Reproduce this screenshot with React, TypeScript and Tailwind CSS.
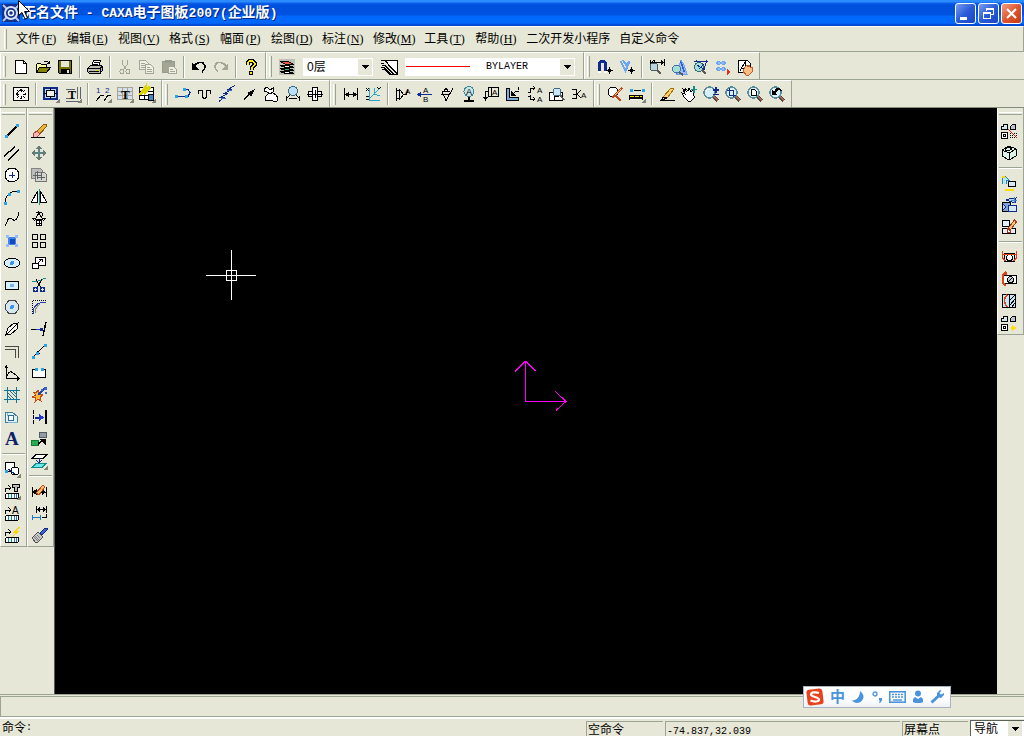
import React, { ReactNode } from "react";

const K = "#000000";
const N = "#10298c";
const T = "#108c8c";
const G = "#a5a594";
const B = "#6ba5f0";

const p = (d: string, stroke = K, fill = "none", w = 1) => (
  <path d={d} stroke={stroke} fill={fill} strokeWidth={w} />
);
const t = (x: number, y: number, s: string, size = 9, fill = K) => (
  <text x={x} y={y} fontSize={size} fill={fill} fontFamily="Liberation Sans, sans-serif">
    {s}
  </text>
);
const b = (x: number, y: number, s: string, size = 12, fill = K) => (
  <text x={x} y={y} fontSize={size} fill={fill} fontWeight="bold" fontFamily="Liberation Serif, serif">
    {s}
  </text>
);
const dot = (x: number, y: number, fill = "#29a5e7", s = 3) => (
  <rect x={x} y={y} width={s} height={s} fill={fill} />
);
const corner = <path d="M17 12v5h-5z" fill="#84847b" />;
const lens = (
  <>
    <path d="M10 10l5 5" stroke="#4a4a4a" strokeWidth="3" />
    <path d="M11 10.500l4 4" stroke="#b5654a" />
    <circle cx="6.500" cy="6.500" r="5.500" fill="#d6f0f7" stroke="#5a8c9c" strokeWidth="1.500" />
    <path d="M3.500 6a3 3 0 0 1 3-3" stroke="#fff" fill="none" />
  </>
);
const chip = (
  <>
    <rect x="1.500" y="10.500" width="13" height="5" rx="1.500" fill="#fff" stroke={K} />
    {p("M4.500 11v4M7.500 11v4", T, "none", 1)}
    {p("M10.500 11v4M12.500 11v4", "#2173ce", "none", 1)}
  </>
);
const turn = p("M1.500 9v-4h5M4.500 2.500l2.500 2.500l-2.500 2.500");
const parts = (
  <>
    {p("M.5 3.500h2v-2h4v5h-6z", K, "#d6e7ef")}
    {p("M9.500 6.500v-3l2-2h3v5z", K, "#bdc6ce")}
    {p("M.5 9.500h6v6h-6z", K, "#fff")}
    {p("M2.500 11.500h2v2h-2z")}
  </>
);
const brush = (
  <>
    {p("M7.500 9l6-8l2 2l-6 8z", "#a5421a", "#f7c67b")}
    {p("M6 9l4 4l-4 1z", "#b53118", "#fff")}
  </>
);

const icons: Record<string, ReactNode> = {
  新建: <>{p("M2.500 1.500h8l3 3v10h-11z", K, "#fff")}{p("M10.500 1.500v3h3")}</>,
  打开: <>{p("M1.500 13.500v-8l1-1h3l1 1h5v3", K, "#ffff9c")}{p("M1.500 13.500l3-5h11l-4 5z", K, "#848400")}{p("M8.500 3.500l1-1h3l2 2M14.500 1.500v3h-3")}</>,
  保存: <>{p("M1.500 1.500h13v13h-12l-1-1z", K, "#737300")}<rect x="4" y="2" width="8" height="6" fill="#e6e7d6" /><rect x="4" y="10" width="9" height="5" /><rect x="10" y="11" width="2" height="3" fill="#e6e7d6" /></>,
  打印: <>{p("M4.500 7.500l2-6h7l-2 6z", K, "#fff")}{p("M7 3.500h5M6 5.500h5")}{p("M.5 9.500l3-3h11l1 1v4l-3 3h-10l-2-2z", K, "#bdbdb5")}{p("M1 9.500h12v5M2 12.500h10M13 9.500l2-2")}<rect x="9" y="11" width="2" height="1" fill="#dede00" /></>,
  剪切: <>{p("M5.500 1v4l4 6M10.500 1v4l-4 6", G)}<circle cx="5" cy="12.500" r="2" fill="none" stroke={G} /><circle cx="11" cy="12.500" r="2" fill="none" stroke={G} /></>,
  复制: <>{p("M.5 1.500h6l3 3v6h-9z", G, "#efefe6")}{p("M2 4.500h4M2 6.500h5M2 8.500h5", G)}{p("M6.500 5.500h5l3 3v6h-8z", G, "#efefe6")}{p("M8 8.500h3M8 10.500h5M8 12.500h5", G)}</>,
  粘贴: <>{p("M1.500 2.500h12v11h-12z", "#949c8c", G)}<rect x="4" y="1" width="7" height="3" fill="#949c8c" />{p("M7.500 7.500h5l3 3v4h-8z", G, "#efefe6")}{p("M9 10.500h3M9 12.500h5", G)}</>,
  撤销: <>{p("M3 7c3-4 6-4 9-3c3 2 3 6-1 9", K, "none", 1.5)}<path d="M1 4v7h7z" /></>,
  重做: <>{p("M13 7c-3-4-6-4-9-3c-3 2-3 6 1 8", G, "none", 1.5)}<path d="M15 4v7h-7z" fill={G} /></>,
  帮助: <>{p("M4.500 6v-2l2-2h3l2 2v2l-3 3v2", K, "none", 4)}{p("M4.500 6v-2l2-2h3l2 2v2l-3 3v2", "#ffef00", "none", 2)}<rect x="6" y="12" width="4" height="4" /><rect x="7" y="13" width="2" height="2" fill="#ffef00" /></>,
  图层: <>{p("M1 12.500h8l6 2h-8z", K, "#fff")}{p("M1 9.500h8l6 2h-8z", K, "#29bd63")}{p("M1 6.500h8l6 2h-8z", K, "#fff")}{p("M1 2.500h8l6 3h-8z", K, "#f75a42")}</>,
  线型: <>{p("M3.500 1.500h13v14z", K, "#fff")}{p("M0 1.500h4l13 14M0 4.500h3M1 6.500h3l9 9h3M0 8.500h3l7 7h3M1 10.500h3l5 5h2")}</>,
  捕捉: <>{p("M2.500 12v-7a3 3 0 0 1 6 0v7", N, "none", 3)}{p("M1 12.500h3M7 12.500h3", "#fff", "none", 2)}{p("M12.500 8v7M9 11.500h7M11 10l3 3M14 10l-3 3")}</>,
  正交: <>{p("M1.500 2l5 10l4-10M4 1l3 5l3-3", B, "none", 2)}{p("M12.500 8v7M9 11.500h7M11 10l3 3M14 10l-3 3")}</>,
  查询距离: <>{p("M1.500 1v8M15.500 0v7M2 3.500h13M2 3.500l3-2v4zM15 3.500l-3-2v4z")}<circle cx="5" cy="8" r="4" fill="#bdd6de" stroke="#4a5a63" />{p("M8 11l4 4", "#5a5a5a", "none", 2)}</>,
  查询面积: <>{p("M10 1l3 5l3 9h-10z", B, "#9cbdff")}<circle cx="5.500" cy="10" r="4" fill="#a5ded6" stroke="#4273a5" />{p("M9.500 2l4 11", "#3163ce", "none", 1.5)}{p("M8 13l4 3", "#5a5a5a", "none", 2)}</>,
  查询角度: <>{p("M1 2.500h14M3 1l9 10M14 1l-4 12", N)}<circle cx="6" cy="8" r="4.500" fill="#a5ded6" stroke="#316b73" />{p("M4 6l8 5M11 5l-5 5", N)}{p("M9 11l4 4", "#5a5a5a", "none", 2)}</>,
  点阵: <>{p("M1 4l3-2l2 2l2-2l3 2M1 4l3 2l2-2l2 2l3-2M1 10l3-2l2 2l2-2l3 2M1 10l3 2l2-2l2 2l3-2", B, "#94bdff")}<path d="M12 10v6l4-3z" fill="#e73118" /></>,
  浏览: <>{p("M1.500 1.500h9l3 3v9h-12z", K, "#fff")}{p("M3 12l5-9v9M4 9h4")}{p("M8 8l2-2l1 2l1-2l1 2l2 0v5l-3 3h-3l-3-4z", "#b5632a", "#ffbd84")}</>,

  平移: <>{p("M.5 1.500h15v13h-15z", K, "#f7f7ef")}{p("M8 3v3M8 10v3M3 8h3M10 8h3M4 4l2 2M12 4l-2 2M4 12l2-2M12 12l-2-2")}<path d="M8 2l2 2.500H6zM8 14l2-2.500H6zM2 8l2.500-2v4zM14 8l-2.500-2v4z" /></>,
  图幅: <>{p("M1 2h13v11h-13z", N, "#bdd6f7", 2)}{p("M3.500 4.500h8v6h-8z", K, "#f0f3e8")}{p("M7.500 2v3M7.500 10v3M1 7.500h3M11 7.500h3")}{corner}</>,
  标题栏: <>{p("M.5 3.500h9M.5 12.500h9M12.500 1v12M15 1v12M1 15.500h14", "#5a6373")}{b(3, 13, "T", 12)}{corner}</>,
  序号: <>{t(1, 7, "1", 8, N)}{t(10, 7, "2", 8, N)}{p("M1 15l5-6h3M9 15l4-6h3")}{corner}</>,
  明细表: <>{p("M.5 1.500h15v12h-15zM1 5.500h14M1 9.500h14M5.500 2v11M10.500 2v11", G, "#d6deef")}{b(4, 13, "T", 13)}{corner}</>,
  图符: <>{p("M.5 1.500h14v12h-14zM1 5.500h14M1 9.500h14M5.500 2v11", K, "#fff")}{p("M1 9l5-7v4l5-5", "#ded600", "none", 3)}<rect x="9.500" y="8.500" width="5" height="6" fill="#428cc6" stroke={K} />{corner}</>,
  多段线: <>{dot(0, 9)}{dot(10, 9)}{dot(8, 2)}{p("M3 10.500h7M11 3.500h2l2 3l-2 4", N)}</>,
  波浪线: p("M1.500 8v-3l1-1h2l1 1v6l1 1h2l1-1v-6l1-1h2l1 1v3"),
  折断线: <>{p("M0 15.500l5-4H1.500l7-4H5.500l7-4H9l7-4", N)}{p("M2 12.500h5M8 4.500h5", "#426bce")}</>,
  箭头: <>{p("M3 13.500l5-5")}<path d="M14 3l-4 8l-4-4z" /></>,
  齿轮: p("M1 3l3-2l3 3l3-2v4l-3 2l-3-2l-3-1zM5 8l-3 3l1 4l4-1l3 1l4 0l1-3l-2-3l-3-2", K, "#fff"),
  放大镜: <><circle cx="8" cy="5" r="4.500" fill="#bddef7" stroke="#3a6b84" />{p("M5 9l-4 4M11 9l4 4M4 12.500h8")}{p("M1.500 10v5M14.500 10v5")}</>,
  孔: <>{p("M1.500 5.500h13v5h-13z", K, "#fff")}{p("M5.500 1.500h5v13h-5z", K, "#fff")}{p("M0 8h16M8 4v8")}</>,
  尺寸标注: <>{p("M1.500 2v12M14.500 2v12M2 8.500h12")}<path d="M2 8.500l4-3v6zM14 8.500l-4-3v6z" /></>,
  坐标标注: <>{p("M4.500 2v12h10M4 13L15 2M9 2l0 6l6 2", "#29a5ce")}{p("M1 2l3 3M1 5l3-3M12 1l2 2l2-2M1 10h3M1 13h3")}</>,
  倒角标注: <>{p("M1.500 2v13M1.500 4.500h4l3 4l-3 4h-4M4.500 3v11M8 8.500h3l2-4")}{t(10, 8, "A", 8)}</>,
  基准: <>{t(6, 7, "A", 8)}{t(6, 16, "B", 8)}{p("M1 8.500h14", N)}<path d="M0 8.500l4-3v6z" fill={N} /></>,
  粗糙度: <>{p("M3 5.500l4 9l7-12M3 5.500h8M2 8.500h8")}{p("M5 5l2-3l2 3")}</>,
  基准代号: <><circle cx="8" cy="5.500" r="5" fill="#c6e7e7" stroke="#428494" />{t(5, 9, "A", 9)}{p("M8 11v3M3 14.500h10", K, "none", 2)}</>,
  形位公差: <>{p("M5.500 1.500h10v9h-10zM2.500 14v-9h3M8.500 2v8")}<path d="M0 11h5l-2.500 4z" />{t(9, 9, "A", 8)}</>,
  焊接: <>{p("M1.500 2.500h3v9h9v3h-12z", K, "#7badde")}{p("M6 10l5-5h3M13 1v3")}<path d="M6 10v-5l5 5z" /></>,
  剖切: <>{p("M3.500 7v-5h4M6 0l2 2l-2 2M3.500 9v4h4M6 11l2 2l-2 2M1 6h3M1 10h3")}{t(10, 7, "A", 8)}{t(10, 16, "A", 8)}</>,
  局部放大: <>{p("M.5 6.500h13v8h-13zM5 14v-4h5", K, "#fff")}<circle cx="8" cy="6" r="4" fill="#c6e7f7" stroke="#426b84" />{p("M11 9l4 5", "#5a5a5a", "none", 2)}</>,
  向视图: <>{p("M1 3.500h4v9h-4M2 8h4M10 4l-4 4l4 4")}{t(10, 12, "A", 8)}</>,
  重画: <><circle cx="6" cy="6" r="5" fill="#fff" stroke={K} />{p("M9 10l5 5M15 2L5 12", "#b54a21", "none", 2)}{p("M14 3L8 9", "#ffc67b", "none", 1)}</>,
  线宽: <>{dot(1, 3)}{dot(13, 3)}{p("M5 4.500h7", K, "none", 1)}<rect y="9" width="14" height="5" /><path d="M1 10.500h12" stroke="#ffe700" strokeDasharray="4 1" /><path d="M1 13h12" stroke="#ffffff" />{corner}</>,
  画笔: <>{p("M4 11l8-9l3 1l-7 9z", "#ad6b10", "#f7d66b")}{p("M4 11l4 1l-6 2.500z")}{p("M2 14.500h14")}</>,
  动态平移: <>{p("M2 3l3 2l-1-3l3 3l1-3l2 4l2-2v5l2 2l-4 4H7l-4-4L1 7l3 1z", K, "#fff")}{p("M13 0v7M10 3.500h6", T, "none", 1.5)}</>,
  动态缩放: <>{lens}{p("M13 1v6M10 4h6M10 8.500h6", N, "none", 1.5)}</>,
  窗口缩放: <>{lens}{p("M4.500 2v7h6M2 4.500h6.500v6", N)}</>,
  显示全部: <>{lens}{p("M4.500 3.500h3l2 2v4h-5z", K, "#fff")}</>,
  显示回溯: <>{lens}{p("M3 9l6-6M6 4c3-3 5-1 6 1", K, "none", 1.5)}<path d="M3 4v5h5z" /></>,

  直线: <>{p("M3 13L13 3", K, "none", 1.5)}{dot(1, 12)}{dot(12, 1)}</>,
  平行线: p("M0 11L11 2M4 15L15 5", K, "none", 1.5),
  圆: <><circle cx="8" cy="8" r="7" fill="#fff" stroke={K} />{p("M8.500 5v6M5 8.500h6", N, "none", 1)}</>,
  圆弧: <>{p("M1 14c0-7 5-12 13-12")}{dot(0, 13)}{dot(4, 4)}{dot(13, 1)}</>,
  样条: p("M1 15c2-2 2-8 5-8c3 0 2 3 5 2c3-1 3-5 4-8"),
  点: <><rect x="4" y="4" width="8" height="8" fill="#4284e7" /><rect x="6" y="6" width="5" height="5" fill="#104ac6" />{dot(2, 2, "#94bdf7")}{dot(11, 2, "#94bdf7")}{dot(2, 11, "#94bdf7")}{dot(11, 11, "#94bdf7")}</>,
  椭圆: <><ellipse cx="8" cy="8" rx="7.500" ry="5" fill="#d6f0ff" stroke={K} /><circle cx="8" cy="8" r="2" fill="#4294e7" /></>,
  矩形: <>{p("M1.500 4.500h13v8h-13z", K, "#d6f0ff")}<circle cx="8" cy="8.500" r="2" fill="#73b5ef" /></>,
  正多边形: <>{p("M5 1.500h6l3.500 4v5l-3.500 4H5l-3.500-4v-5z", "#424242", "#d6e7ef")}<circle cx="8" cy="8" r="2" fill="#4294e7" /></>,
  中心线: <>{p("M2 13l2-6l6-5l4 1l-1 5l-6 5z", K, "#f7f7ef")}{p("M1 15L15 1M6 10l5-5")}</>,
  等距线: p("M1 3.500h13v11M1 6.500h10v8", "#4a4a42", "none", 1),
  公式曲线: p("M2.500 1v12.500h13M1 3l1.500-2l1.500 2M13 11.500l2 2l-2 2M3 11c3-7 5-4 10 0"),
  剖面线: <>{p("M3.500 0v16M12.500 0v16M0 3.500h16M0 12.500h16", "#10739c", "none", 1.5)}{p("M4 6l6 6M4 9l3 3M6 4l6 6M9 4l3 3", "#216b8c")}</>,
  填充: <>{p("M1.500 3.500h7l5 4v6h-12z", "#427b9c", "#def0f7")}<circle cx="7" cy="9" r="3" fill="#fff" stroke="#316b94" />{p("M3 4v3M4 13.500h10", "#7bb5d6")}</>,
  文字: b(1, 14, "A", 19, "#10216b"),
  块生成: <>{p("M1.500 1.500h9v9h-9z", K, "#fff")}<circle cx="11" cy="10" r="4" fill="#fff" stroke={K} />{p("M4 8l7 5", N)}{dot(1, 9)}{corner}</>,
  提取图符: <>{turn}{p("M8.500 1.500h7v3h-2v4h-3v-4h-2z", K, "#bdbdb5")}{chip}{corner}</>,
  驱动图符: <>{turn}{t(8, 9, "A", 10)}{chip}</>,
  图库: <>{turn}<path d="M14 0l-6 6h3l-3 4l8-6h-3l3-4z" fill="#ffd600" />{chip}</>,

  橡皮: <>{p("M5 9l8-8h2v3l-7 8z", "#8c5a10", "#e7b53a")}{p("M2 11l4-3l3 3l-3 3H3z", "#a54242", "#ffb5ad")}{p("M0 14.500h14")}</>,
  移动: <>{p("M8 2v12M2 8h12", "#5a8484", "none", 2)}<path d="M8 0l3 4H5zM8 16l3-4H5zM0 8l4-3v6zM16 8l-4-3v6z" fill="#6b7b73" /></>,
  平移复制: <>{p("M.5 1.500h9l2 2v8h-11z", "#848484", "#bdbdbd")}{p("M4.500 5.500h9l2 2v7h-11z", "#737373", "#d6d6ce")}{p("M6 4v8M2 8h8M10 6v7M7 10h7", "#5a6363")}</>,
  镜像: <>{p("M8 0v16", T)}{p("M6.500 2v11h-6zM9.500 2v11h6z", K, "#fff")}</>,
  旋转: <>{p("M8 2l3 5h4l-3 3M8 2L5 7H1l3 3M5 2c2-2 4-1 6 0l1 3M4 8h8")}<circle cx="8" cy="12" r="3" fill="#fff" stroke={K} />{p("M8 10v4M6 12h4")}</>,
  阵列: p("M1.500 1.500h5v5h-5zM9.500 1.500h5v5h-5zM1.500 9.500h5v5h-5zM9.500 9.500h5v5h-5z"),
  缩放: <>{p("M4.500 2.500h10v8h-10z", K, "#fff")}{p("M1.500 8.500h6v5h-6z", K, "#fff")}{p("M7 8l4-4M8 4h3v3")}</>,
  裁剪: <>{p("M1 5l6-1l8-3", T)}{p("M5 2l5 9M11 2l-5 9")}<circle cx="4.500" cy="12.500" r="2" fill="none" stroke={N} strokeWidth="1.500" /><circle cx="11.500" cy="12.500" r="2" fill="none" stroke={N} strokeWidth="1.500" /></>,
  过渡: <><path d="M1.500 15V1.500H15" stroke={K} fill="none" strokeDasharray="1 1" />{p("M2 15c0-8 5-12 13-12", "#2142b5", "none", 1)}{p("M4 14c0-4 2-7 5-9", "#848c94")}</>,
  延伸: <>{p("M0 8.500h5M12 15l3-14", K, "none", 1.5)}{p("M5 8.500h5", "#2139ce", "none", 1.5)}{dot(9, 7, N)}</>,
  打断: <>{p("M3 13L13 3M6 8l3 3")}{dot(1, 13)}{dot(5, 9)}{dot(13, 1)}</>,
  拉伸: <>{p("M5 4.500H1.500v8h13v-8H11", K, "#fff")}{dot(4, 3)}{dot(10, 3)}</>,
  打散: <>{p("M2 5l3 3l-4 2l4 1l-1 4l3-3l3 2l-1-4l3-2l-4-1l-1-4l-2 3z", "#bd4a10", "#ffb539")}{p("M7 8l6-6", "#2142b5", "none", 1.5)}{dot(13, 0, "#3963c6")}{dot(10, 2, "#3963c6", 2)}{dot(14, 5, "#3963c6", 2)}</>,
  对齐: <><path d="M2.500 1v14" stroke={K} strokeDasharray="4 1" />{p("M14.500 1v14", K, "none", 2)}{p("M4 8.500h7", N, "none", 2)}<path d="M8 5l5 3.500l-5 3.500z" fill="#2139ce" /></>,
  改变颜色: <>{p("M.5 9.500h7v5h-7z", "#107b31", "#29ad52")}{p("M8.500 1.500h7v5h-7z", "#525a63", "#949ca5")}{p("M7 13l5-4", K, "none", 2)}<path d="M8 8h7v6z" /></>,
  改变层: <>{p("M5 1.500h11l-4 4H1z", K, "#fff")}{p("M5 10.500h10l-4 4H1z", T, "#6be7e7")}{p("M8 5v4M5 7l3 3l3-3", N, "none", 1)}{corner}</>,
  标注编辑: <>{p("M1.500 4v10M15.500 4v10M2 9h13")}<path d="M1 9l5-3v6zM15 9l-4-3v6z" />{p("M5 10l7-8l2 2l-6 8z", "#b54a10", "#ffbd73")}</>,
  尺寸驱动: <>{p("M5.500 1v7M15.500 1v7M6 4.500h9")}<path d="M6 4.500l3-3v6zM15 4.500l-3-3v6z" />{p("M1.500 10v5M9.500 10v5M2 12.500h7", "#217bbd")}{p("M11 12h4v-3")}</>,
  格式刷: <>{p("M9 6l5-5h2v2l-5 5z", N, "#4263bd")}{p("M7 5l5 5l-5 5H4L1 11z", "#525252", "#c6c6c6")}{p("M4 9l4 4M3 10l4 4M6 8l3 3", "#848484")}</>,

  图纸: <>{parts}<path d="M9 10.500h7M9 12.500h7M9 14.500h7" stroke={K} strokeDasharray="1 1" />{p("M7 6l9 9", "#de2118")}</>,
  实体: <>{p("M1 5l7-4l7 3v7l-7 4l-7-4z", K, "#def0e7")}{p("M1 5l7 3l7-4M8 8v7M4 5c2-3 5-3 7-1l-4 2z")}</>,
  装配: <>{p("M1 9V4l3-3l4 4H5v4", "#2184b5", "#b5e7ef")}{p("M4 15h9", "#ffde00", "none", 2)}{p("M7.500 6.500h7v5h-7z", K, "#d6e7f7")}{p("M1 2h3", "#ffd600", "none", 2)}</>,
  关联: <>{p("M1.500 5.500h8v9h-8z", K, "#7ba5d6")}{p("M7.500 8.500h8v6h-8z", N, "#d6e7f7")}{p("M2 7l3 3l-3 3M5 3l9 3l1-5l-7 1z", N, "#b5d6ff")}{p("M13 0v6M10 3h6", "#4a84ce")}</>,
  零件编辑: <>{p("M1.500 1.500h7v6h-7zM1.500 9.500h13v5h-13z", K, "#e7f0f7")}{brush}</>,
  截面: <>{p("M3.500 4.500h10v8h-10z", K, "#def0f7")}<circle cx="8.500" cy="8.500" r="3" fill="#fff" stroke={K} />{p("M1.500 2v7l3 3M15.500 2v7l-3 3M2 5.500h13", "#de4218")}</>,
  剖视: <>{p("M2.500 4.500h13v8h-13z", K, "#fff")}<circle cx="9.500" cy="8.500" r="3" fill="#c6ced6" stroke={K} />{p("M5 1L2 4v8l3 3M5 1v3", "#de4218", "none", 1.5)}{p("M8 10l4-4")}</>,
  局部剖: <>{p("M1.500 1.500h13v13h-13zM8.500 2v12", K, "#c6e7f7")}{p("M6 2c-4 4-3 8 0 12", "#de4218", "none", 1.5)}{p("M9 7l5-5M9 12l5-6M11 14l3-4")}</>,
  新视图: <>{parts}<path d="M12 9l1 3l3 1l-3 1l-1 3l-1-3l-3-1l3-1z" fill="#ffde00" /></>,
};

function Tool({ name, active = false }: { name: string; active?: boolean }) {
  return (
    <button type="button" aria-label={name} className="flex size-[22px] shrink-0 items-center justify-center">
      <svg
        viewBox="0 0 16 16"
        className={active ? "size-4 overflow-visible bg-[#c0c2b8]" : "size-4 overflow-visible"}
        shapeRendering="crispEdges"
        aria-hidden="true"
      >
        {icons[name]}
      </svg>
    </button>
  );
}

function Tools({ names, vertical = false }: { names: string; vertical?: boolean }) {
  return (
    <>
      {names.split(" ").map((n, i) =>
        n === "|" ? (
          vertical ? (
            <span key={i} className="flex h-2 w-full items-center px-px">
              <span className="h-[2px] w-full border-t border-b border-t-[#9ca594] border-b-white" />
            </span>
          ) : (
            <span key={i} className="flex w-2 justify-center">
              <span className="h-[22px] w-[2px] border-r border-l border-r-white border-l-[#9ca594]" />
            </span>
          )
        ) : (
          <Tool key={i} name={n} active={n === "图层"} />
        )
      )}
    </>
  );
}

function Bar({ children }: { children: ReactNode }) {
  return (
    <div className="flex h-full items-center border-t border-r border-t-white border-r-[#9ca594] pr-[3px] pl-[3px] shadow-[inset_1px_0_0_#fff]">
      <span className="mr-1 h-[21px] w-[3px] border-r border-l border-r-[#9ca594] border-l-white" />
      {children}
    </div>
  );
}

function Dock({ names, label }: { names: string; label: string }) {
  return (
    <div
      role="toolbar"
      aria-label={label}
      className="flex w-[27px] flex-col items-start self-start border-r border-b border-l border-r-[#9ca594] border-b-[#9ca594] border-l-white pt-1"
    >
      <span className="mb-[5px] flex w-full px-px">
        <span className="h-[3px] w-full border-t border-b border-t-white border-b-[#9ca594]" />
      </span>
      <Tools names={names} vertical />
    </div>
  );
}

/* Wide glyphs and half-width glyphs sit on the same cell grid: one wide cell is two narrow ones. */
function Cells({ text, narrow }: { text: string; narrow: string }) {
  return (
    <>
      {text.split(/([\x20-\x7e]+)/).map((s, i) =>
        /^[\x20-\x7e]/.test(s) ? (
          <span key={i} className={narrow}>
            {s}
          </span>
        ) : (
          s
        )
      )}
    </>
  );
}

const NARROW = "whitespace-pre font-['Liberation_Mono',monospace] text-[10px]";

function Combo({ label, value, narrow = false }: { label: string; value: string; narrow?: boolean }) {
  return (
    <>
      <select
        aria-label={label}
        className={
          narrow
            ? "h-4 min-w-0 flex-1 appearance-none bg-white px-[6px] font-['Liberation_Mono',monospace] text-[10px] leading-4 outline-none"
            : "h-4 min-w-0 flex-1 appearance-none bg-white px-[3px] text-xs leading-4 outline-none"
        }
      >
        <option>{value}</option>
      </select>
      <span className="flex h-full w-[14px] shrink-0 items-center justify-center bg-[#e6e7d6]">
        <svg viewBox="0 0 7 4" className="h-1 w-[7px]" shapeRendering="crispEdges" aria-hidden="true">
          <path d="M0 0h7L3.500 4z" />
        </svg>
      </span>
    </>
  );
}

const menus: [string, string][] = [
  ["文件", "F"],
  ["编辑", "E"],
  ["视图", "V"],
  ["格式", "S"],
  ["幅面", "P"],
  ["绘图", "D"],
  ["标注", "N"],
  ["修改", "M"],
  ["工具", "T"],
  ["帮助", "H"],
  ["二次开发小程序", ""],
  ["自定义命令", ""],
];

function TitleBar() {
  return (
    <header className="relative flex h-[26px] shrink-0 items-center bg-[linear-gradient(#2b8bff_0,#2b8bff_2px,#0a62ee_3px,#0050dd_5px,#0052e0_15px,#0068fa_16px,#0068fa_23px,#003cc0_26px)] pr-[2px] pl-[2px]">
      <svg viewBox="0 0 18 18" className="size-[18px]" aria-hidden="true">
        <rect width="18" height="18" fill="#10318c" />
        <path d="M1 1l4 4M17 17l-4-4M1 17l4-4M17 1l-4 4" stroke="#b5c6e7" strokeWidth="2" />
        <circle cx="9" cy="9" r="6" fill="none" stroke="#d6e0f7" strokeWidth="2" />
        <circle cx="9" cy="9" r="2.500" fill="none" stroke="#f0f3ff" strokeWidth="1.500" />
      </svg>
      <h1 className="pl-[2px] text-sm leading-5 font-bold whitespace-nowrap text-white [text-shadow:1px_1px_0_#00247a]">
        <Cells
          text="无名文件 - CAXA电子图板2007(企业版)"
          narrow="whitespace-pre font-['Liberation_Mono',monospace] text-[13px]"
        />
      </h1>
      <div className="ml-auto flex gap-[2px] pt-px">
        <button
          type="button"
          aria-label="最小化"
          className="size-[21px] rounded-[3px] border border-white bg-linear-to-br from-[#7b9cf0] via-[#2a5bd8] to-[#1a46c8]"
        >
          <svg viewBox="0 0 19 19" aria-hidden="true">
            <path d="M4 13h7v3H4z" fill="#fff" />
          </svg>
        </button>
        <button
          type="button"
          aria-label="还原"
          className="size-[21px] rounded-[3px] border border-white bg-linear-to-br from-[#7b9cf0] via-[#2a5bd8] to-[#1a46c8]"
        >
          <svg viewBox="0 0 19 19" shapeRendering="crispEdges" aria-hidden="true">
            <path d="M7.500 7V4.500h7v6H12M7 5.500h8" stroke="#fff" fill="none" />
            <path d="M4.500 8.500h7v6h-7zM4 9.500h8" stroke="#fff" fill="none" />
          </svg>
        </button>
        <button
          type="button"
          aria-label="关闭"
          className="size-[21px] rounded-[3px] border border-white bg-linear-to-br from-[#f09c80] via-[#e0552e] to-[#c43a12]"
        >
          <svg viewBox="0 0 19 19" aria-hidden="true">
            <path d="M5 5l9 9M14 5l-9 9" stroke="#fff" strokeWidth="2.200" />
          </svg>
        </button>
      </div>
      <svg viewBox="0 0 12 20" className="absolute top-0 left-[18px] h-5 w-3" aria-hidden="true">
        <path d="M.5 .5v15l3.500-3l3 6.500l2.500-1l-3-6.500h5z" fill="#fff" stroke="#000" />
      </svg>
    </header>
  );
}

function ImeBar() {
  return (
    <div className="absolute right-[73px] bottom-[28px] flex h-[22px] w-[148px] items-center justify-between border border-[#a8b4c4] bg-linear-to-b from-white from-60% to-[#eef0f4] pr-[6px] pl-[2px] text-[#4a94de]">
      <svg viewBox="0 0 18 18" className="size-[18px]" aria-hidden="true">
        <rect x="1" y="1" width="16" height="16" rx="3" fill="#e8411c" transform="rotate(-7 9 9)" />
        <path d="M13 5c-3-1-8-1-8 1.500S13 9 13 11.500s-5 2.500-8.500 1" stroke="#fff" strokeWidth="2.200" fill="none" />
      </svg>
      <span className="text-[15px] leading-4 font-bold">中</span>
      <svg viewBox="0 0 14 14" className="size-[14px]" aria-hidden="true">
        <path d="M9 1c4 3 5 7 1 10.500C7 14 3 13 1 10.500c5 0 8-4 8-9.500z" fill="currentColor" />
      </svg>
      <svg viewBox="0 0 12 14" className="h-[14px] w-3" aria-hidden="true">
        <circle cx="4" cy="4" r="2" fill="none" stroke="currentColor" strokeWidth="1.300" />
        <path d="M8 8h3v2.500L9 13H8l1-2.500H8z" fill="currentColor" />
      </svg>
      <svg viewBox="0 0 17 12" className="h-3 w-[17px]" aria-hidden="true">
        <rect x=".8" y=".8" width="15.400" height="10.400" fill="none" stroke="currentColor" strokeWidth="1.600" />
        <path d="M3 3.500h11M3 6h11" stroke="currentColor" strokeWidth="1.500" strokeDasharray="2 1" />
        <path d="M4 9h9" stroke="currentColor" strokeWidth="1.500" />
      </svg>
      <svg viewBox="0 0 12 14" className="h-[14px] w-3" aria-hidden="true">
        <circle cx="6" cy="3.500" r="3" fill="currentColor" />
        <path d="M1 9l2-2l3 2l3-2l2 2v3l-2 1H3l-2-1z" fill="currentColor" />
      </svg>
      <svg viewBox="0 0 14 14" className="size-[14px]" aria-hidden="true">
        <path d="M1.500 12.500L8 6.500" stroke="currentColor" strokeWidth="3" />
        <path d="M10 0L7 3v4l4 1l3-3l0-2l-3 1.500l-1.500-1.500l2-2.500z" fill="currentColor" />
      </svg>
    </div>
  );
}

export default function App() {
  return (
    <div className="relative flex h-screen w-full flex-col overflow-hidden bg-[#e6e7d6] font-['Liberation_Sans','Noto_Sans_CJK_SC',sans-serif] text-xs text-black">
      <TitleBar />

      <nav className="flex h-[26px] shrink-0 items-center border-t border-r border-b border-t-white border-r-[#9ca594] border-b-[#9ca594] pl-1">
        <span className="mr-[9px] h-5 w-[3px] border-r border-l border-r-[#9ca594] border-l-white" />
        <ul className="flex gap-[9px] leading-4">
          {menus.map(([name, key]) => (
            <li key={name}>
              <button type="button" className="flex items-baseline whitespace-nowrap">
                {name}
                {key && (
                  <span className="flex w-[18px] justify-center font-['Liberation_Serif',serif] text-xs leading-4">
                    (<u>{key}</u>)
                  </span>
                )}
              </button>
            </li>
          ))}
        </ul>
      </nav>

      <div className="flex h-7 shrink-0">
        <Bar>
          <Tools names="新建 打开 保存 | 打印 | 剪切 复制 粘贴 | 撤销 重做 | 帮助" />
        </Bar>
        <Bar>
          <Tools names="图层" />
          <div className="ml-[5px] flex h-[18px] w-[70px] items-center border border-white bg-white">
            <Combo label="当前层" value="0层" />
          </div>
          <span className="ml-[5px] flex">
            <Tool name="线型" />
          </span>
          <div className="mr-[5px] ml-[5px] flex h-[18px] w-[170px] items-center border border-white bg-white">
            <span className="h-px w-16 shrink-0 bg-[#ff0000]" />
            <span className="w-[10px] shrink-0" />
            <Combo label="线型选择" value="BYLAYER" narrow />
          </div>
        </Bar>
        <Bar>
          <Tools names="捕捉 正交 | 查询距离 查询面积 查询角度 点阵 浏览" />
        </Bar>
      </div>

      <div className="flex h-[27px] shrink-0 shadow-[0_-1px_0_#9ca594]">
        <Bar>
          <Tools names="平移 | 图幅 标题栏 | 序号 明细表 图符" />
        </Bar>
        <Bar>
          <Tools names="多段线 波浪线 折断线 箭头 齿轮 放大镜 孔" />
        </Bar>
        <Bar>
          <Tools names="尺寸标注 坐标标注 | 倒角标注 基准 粗糙度 基准代号 形位公差 焊接 剖切 局部放大 向视图" />
        </Bar>
        <Bar>
          <Tools names="重画 线宽 | 画笔 动态平移 动态缩放 窗口缩放 显示全部 显示回溯" />
        </Bar>
      </div>

      <main className="flex min-h-0 flex-1 border-t border-b border-t-[#848c7b] border-b-[#9ca594]">
        <div className="flex items-start">
          <Dock
            label="绘图工具"
            names="直线 平行线 圆 圆弧 样条 点 椭圆 矩形 正多边形 中心线 等距线 公式曲线 剖面线 填充 文字 | 块生成 提取图符 驱动图符 图库"
          />
          <Dock
            label="编辑工具"
            names="橡皮 移动 平移复制 镜像 旋转 阵列 缩放 裁剪 过渡 延伸 打断 拉伸 打散 对齐 改变颜色 改变层 | 标注编辑 尺寸驱动 格式刷"
          />
        </div>
        <div className="relative min-w-0 flex-1 overflow-hidden border-t border-l border-t-black border-l-[#5a5a52] bg-black">
          <svg
            viewBox="0 0 50 50"
            className="absolute top-[141px] left-[151px] size-[50px]"
            shapeRendering="crispEdges"
            aria-hidden="true"
          >
            <path d="M25.500 0v50M0 25.500h50M20.500 20.500h10v10h-10z" stroke="#fff" fill="none" />
          </svg>
          <svg
            viewBox="0 0 54 50"
            className="absolute top-[252px] left-[459px] h-[50px] w-[54px]"
            shapeRendering="crispEdges"
            aria-hidden="true"
          >
            <path d="M11.500 0v40.500h41M1 10.500l10.500-10.500l10 10M41.500 30.500l10.500 10l-10 9" stroke="#ff00ff" fill="none" />
          </svg>
        </div>
        <div className="flex items-start">
          <Dock label="视图工具" names="图纸 实体 | 装配 关联 零件编辑 | 截面 剖视 局部剖 新视图" />
        </div>
      </main>

      <div className="mt-px h-[21px] shrink-0 border-t border-b border-l border-[#9ca594]" />

      <footer className="flex h-[19px] shrink-0 items-end gap-[2px] border-t-2 border-white leading-4">
        <label className="flex min-w-0 flex-1 items-center pl-[2px]">
          <Cells text="命令:" narrow={NARROW} />
          <input className="h-[15px] min-w-0 flex-1 bg-transparent pl-1 outline-none" />
        </label>
        <span className="h-[15px] w-[77px] border-t border-l border-[#9ca594] pl-px">空命令</span>
        <span className="h-[15px] w-[235px] border-t border-l border-[#9ca594] pl-px">
          <span className={NARROW}>-74.837,32.039</span>
        </span>
        <span className="h-[15px] w-[66px] border-t border-l border-[#9ca594] pl-px">屏幕点</span>
        <span className="flex h-4 w-[54px] items-center border-t border-l border-[#5a6352] bg-white pr-[2px]">
          <Combo label="捕捉方式" value="导航" />
        </span>
      </footer>

      <ImeBar />
    </div>
  );
}
